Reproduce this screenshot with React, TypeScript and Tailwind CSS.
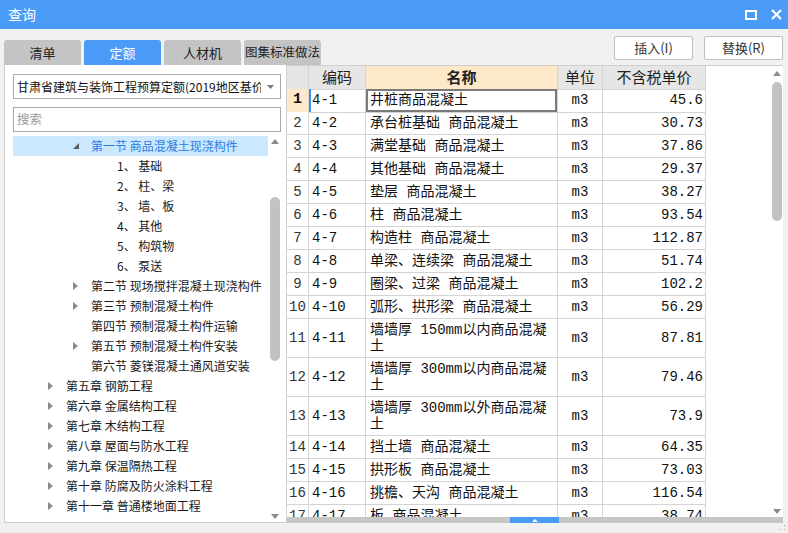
import React from 'react';

type Row = { no: number; code: string; name: string[]; unit: string; price: string };

const rows: Row[] = [
  { no: 1, code: '4-1', name: ['井桩商品混凝土'], unit: 'm3', price: '45.6' },
  { no: 2, code: '4-2', name: ['承台桩基础 商品混凝土'], unit: 'm3', price: '30.73' },
  { no: 3, code: '4-3', name: ['满堂基础 商品混凝土'], unit: 'm3', price: '37.86' },
  { no: 4, code: '4-4', name: ['其他基础 商品混凝土'], unit: 'm3', price: '29.37' },
  { no: 5, code: '4-5', name: ['垫层 商品混凝土'], unit: 'm3', price: '38.27' },
  { no: 6, code: '4-6', name: ['柱 商品混凝土'], unit: 'm3', price: '93.54' },
  { no: 7, code: '4-7', name: ['构造柱 商品混凝土'], unit: 'm3', price: '112.87' },
  { no: 8, code: '4-8', name: ['单梁、连续梁 商品混凝土'], unit: 'm3', price: '51.74' },
  { no: 9, code: '4-9', name: ['圈梁、过梁 商品混凝土'], unit: 'm3', price: '102.2' },
  { no: 10, code: '4-10', name: ['弧形、拱形梁 商品混凝土'], unit: 'm3', price: '56.29' },
  { no: 11, code: '4-11', name: ['墙墙厚 150mm以内商品混凝', '土'], unit: 'm3', price: '87.81' },
  { no: 12, code: '4-12', name: ['墙墙厚 300mm以内商品混凝', '土'], unit: 'm3', price: '79.46' },
  { no: 13, code: '4-13', name: ['墙墙厚 300mm以外商品混凝', '土'], unit: 'm3', price: '73.9' },
  { no: 14, code: '4-14', name: ['挡土墙 商品混凝土'], unit: 'm3', price: '64.35' },
  { no: 15, code: '4-15', name: ['拱形板 商品混凝土'], unit: 'm3', price: '73.03' },
  { no: 16, code: '4-16', name: ['挑檐、天沟 商品混凝土'], unit: 'm3', price: '116.54' },
  { no: 17, code: '4-17', name: ['板 商品混凝土'], unit: 'm3', price: '38.74' },
];

type Node = { level: 1 | 2 | 3; text: string; arrow?: 'open' | 'closed'; selected?: boolean };

const tree: Node[] = [
  { level: 2, text: '第一节 商品混凝土现浇构件', arrow: 'open', selected: true },
  { level: 3, text: '1、 基础' },
  { level: 3, text: '2、 柱、梁' },
  { level: 3, text: '3、 墙、板' },
  { level: 3, text: '4、 其他' },
  { level: 3, text: '5、 构筑物' },
  { level: 3, text: '6、 泵送' },
  { level: 2, text: '第二节 现场搅拌混凝土现浇构件', arrow: 'closed' },
  { level: 2, text: '第三节 预制混凝土构件', arrow: 'closed' },
  { level: 2, text: '第四节 预制混凝土构件运输' },
  { level: 2, text: '第五节 预制混凝土构件安装', arrow: 'closed' },
  { level: 2, text: '第六节 菱镁混凝土通风道安装' },
  { level: 1, text: '第五章 钢筋工程', arrow: 'closed' },
  { level: 1, text: '第六章 金属结构工程', arrow: 'closed' },
  { level: 1, text: '第七章 木结构工程', arrow: 'closed' },
  { level: 1, text: '第八章 屋面与防水工程', arrow: 'closed' },
  { level: 1, text: '第九章 保温隔热工程', arrow: 'closed' },
  { level: 1, text: '第十章 防腐及防火涂料工程', arrow: 'closed' },
  { level: 1, text: '第十一章 普通楼地面工程', arrow: 'closed' },
  { level: 1, text: '第十二章 普通墙柱面工程', arrow: 'closed' },
];

const cols = 'grid grid-cols-[22px_57px_192px_45px_103px]';
const cell = 'border-r border-b border-[#d4d4d4]';

function TitleBar() {
  return (
    <div className="h-[29px] bg-[#4a9bf7] flex items-center justify-between pl-[8px] pr-[6px] text-white">
      <span className="text-[14px]">查询</span>
      <div className="flex items-center gap-[14px]">
        <svg width="12" height="10" viewBox="0 0 12 10">
          <rect x="1" y="1" width="10" height="8" fill="none" stroke="white" strokeWidth="2" />
        </svg>
        <svg width="11" height="11" viewBox="0 0 11 11">
          <path d="M1 1 L10 10 M10 1 L1 10" stroke="white" strokeWidth="2.2" />
        </svg>
      </div>
    </div>
  );
}

function Tabs() {
  const tabs = ['清单', '定额', '人材机', '图集标准做法'];
  return (
    <div className="flex gap-[3px] self-end">
      {tabs.map((t, i) => (
        <div
          key={t}
          className={
            'w-[77px] h-[25px] rounded-t-[3px] flex items-center justify-center ' +
            (i === 1 ? 'bg-[#4a9bf7] text-white text-[13px]' : 'bg-[#c4c4c4] text-[#222] ' + (i === 3 ? 'text-[12.5px]' : 'text-[13px]'))
          }
        >
          {t}
        </div>
      ))}
    </div>
  );
}

function TreeRow({ n }: { n: Node }) {
  const pad = n.level === 1 ? 'pl-[35px]' : n.level === 2 ? 'pl-[60px]' : 'pl-[104px]';
  return (
    <div
      className={
        'h-[20px] flex items-center whitespace-nowrap text-[12px] ' +
        pad +
        (n.selected ? ' bg-[#cce8ff] text-[#2a7de1]' : ' text-[#1a1a1a]')
      }
    >
      {n.level !== 3 && (
        <span className="w-[18px] flex items-center">
          {n.arrow === 'open' && (
            <svg width="7" height="7" viewBox="0 0 7 7">
              <path d="M6 0 L6 6 L0 6 Z" fill="#5c5c5c" />
            </svg>
          )}
          {n.arrow === 'closed' && (
            <svg width="5" height="8" viewBox="0 0 5 8">
              <path d="M0 0 L5 4 L0 8 Z" fill="#8a8a8a" />
            </svg>
          )}
        </span>
      )}
      <span>{n.text}</span>
    </div>
  );
}

function LeftPanel() {
  return (
    <div className="w-[282px] h-full bg-white border-l border-b border-[#cfcfcf] flex flex-col pt-[9px] pl-[8px] pr-[5px]">
      <div className="h-[25px] border border-[#a9a9a9] flex items-center pl-[3px] pr-[6px] text-[12px] text-[#111]">
        <span className="flex-1 overflow-hidden whitespace-nowrap">甘肃省建筑与装饰工程预算定额(2019地区基价)</span>
        <svg width="7" height="4" viewBox="0 0 7 4" className="ml-[6px] shrink-0">
          <path d="M0 0 L7 0 L3.5 4 Z" fill="#7a7a7a" />
        </svg>
      </div>
      <div className="mt-[8px] h-[25px] border border-[#a9a9a9] flex items-center pl-[3px] text-[12.5px] text-[#9a9a9a]">
        搜索
      </div>
      <div className="mt-[4px] flex h-[384px] overflow-hidden">
        <div className="flex-1 overflow-hidden">
          {tree.map((n, i) => (
            <TreeRow key={i} n={n} />
          ))}
        </div>
        <div className="w-[13px] flex flex-col items-center bg-white">
          <svg width="8" height="5" viewBox="0 0 8 5" className="mt-[3px]">
            <path d="M0 5 L4 0 L8 5 Z" fill="#8a8a8a" />
          </svg>
          <div className="mt-[53px] w-[10px] h-[164px] rounded-full bg-[#c2c2c2]" />
          <div className="flex-1" />
          <svg width="8" height="5" viewBox="0 0 8 5" className="mb-[1px]">
            <path d="M0 0 L8 0 L4 5 Z" fill="#8a8a8a" />
          </svg>
        </div>
      </div>
    </div>
  );
}

function Grid() {
  const mono = "font-['Liberation_Mono','Noto_Sans_CJK_SC',monospace] text-[14px] text-[#111]";
  return (
    <div className="w-[419px] h-full overflow-hidden bg-white">
      <div className={cols + ' h-[23px] text-[15px] text-[#222]'}>
        <div className={cell + ' bg-[#e6e6e6]'} />
        <div className={cell + ' bg-[#e6e6e6] flex items-center justify-center'}>编码</div>
        <div className={cell + ' bg-[#fde8c8] flex items-center justify-center font-bold'}>名称</div>
        <div className={cell + ' bg-[#e6e6e6] flex items-center justify-center'}>单位</div>
        <div className={cell + ' bg-[#e6e6e6] flex items-center justify-center'}>不含税单价</div>
      </div>
      {rows.map((r) => {
        const tall = r.name.length > 1;
        const first = r.no === 1;
        return (
          <div key={r.no} className={cols + ' ' + mono + (tall ? ' h-[39px]' : ' h-[23px]')}>
            <div
              className={
                cell +
                ' flex items-center justify-center ' +
                (first ? 'bg-[#fde8c8] font-bold font-[\'Liberation_Serif\',serif] text-[15px]' : 'bg-white text-[#333]')
              }
            >
              {r.no}
            </div>
            <div className={cell + ' flex items-center pl-[3px] relative'}>
              {first && <span className="absolute left-0 top-0 bottom-0 w-[2px] bg-[#3d8ef0]" />}
              {r.code}
            </div>
            <div
              className={
                cell +
                ' flex flex-col justify-center pl-[4px] leading-[16px] whitespace-nowrap overflow-hidden' +
                (first ? ' shadow-[inset_0_0_0_2px_#7a7a7a]' : '')
              }
            >
              {r.name.map((l, i) => (
                <span key={i}>{l}</span>
              ))}
            </div>
            <div className={cell + ' flex items-center justify-center'}>{r.unit}</div>
            <div className={cell + ' flex items-center justify-end pr-[2px]'}>{r.price}</div>
          </div>
        );
      })}
    </div>
  );
}

function RightPanel() {
  return (
    <div className="w-[497px] h-full border-l border-t border-[#cfcfcf] flex flex-col bg-white">
      <div className="flex h-[451px] overflow-hidden">
        <Grid />
        <div className="flex-1 bg-white" />
        <div className="w-[13px] flex flex-col items-center">
          <svg width="8" height="5" viewBox="0 0 8 5" className="mt-[5px]">
            <path d="M0 5 L4 0 L8 5 Z" fill="#8a8a8a" />
          </svg>
          <div className="mt-[6px] w-[10px] h-[139px] rounded-full bg-[#c2c2c2]" />
          <div className="flex-1" />
          <svg width="8" height="5" viewBox="0 0 8 5" className="mb-[3px]">
            <path d="M0 0 L8 0 L4 5 Z" fill="#8a8a8a" />
          </svg>
        </div>
      </div>
      <div className="h-[6px] bg-[#c6c6c6] flex">
        <div className="ml-[223px] w-[49px] h-full bg-[#4a9bf7] flex items-center justify-center">
          <svg width="6" height="3" viewBox="0 0 6 3">
            <path d="M0 3 L3 0 L6 3 Z" fill="white" />
          </svg>
        </div>
      </div>
    </div>
  );
}

export default function App() {
  return (
    <div className="w-[788px] h-[533px] bg-[#f1f1f1] flex flex-col overflow-hidden font-['Noto_Sans_CJK_SC','Noto_Sans',sans-serif]">
      <TitleBar />
      <div className="h-[36px] flex justify-between pl-[4px] pr-[5px]">
        <Tabs />
        <div className="flex gap-[11px] mt-[7px]">
          <button className="w-[79px] h-[24px] bg-white border border-[#bdbdbd] rounded-[2px] text-[13px] text-[#333]">插入(I)</button>
          <button className="w-[79px] h-[24px] bg-white border border-[#bdbdbd] rounded-[2px] text-[13px] text-[#333]">替换(R)</button>
        </div>
      </div>
      <div className="h-[458px] flex pl-[4px]">
        <LeftPanel />
        <RightPanel />
      </div>
      <div className="flex-1 flex justify-end items-end pr-[2px] pb-[2px]">
        <svg width="6" height="6" viewBox="0 0 6 6">
          <rect x="4" y="0" width="1" height="1" fill="#999" />
          <rect x="4" y="4" width="1" height="1" fill="#999" />
          <rect x="0" y="4" width="1" height="1" fill="#999" />
        </svg>
      </div>
    </div>
  );
}
